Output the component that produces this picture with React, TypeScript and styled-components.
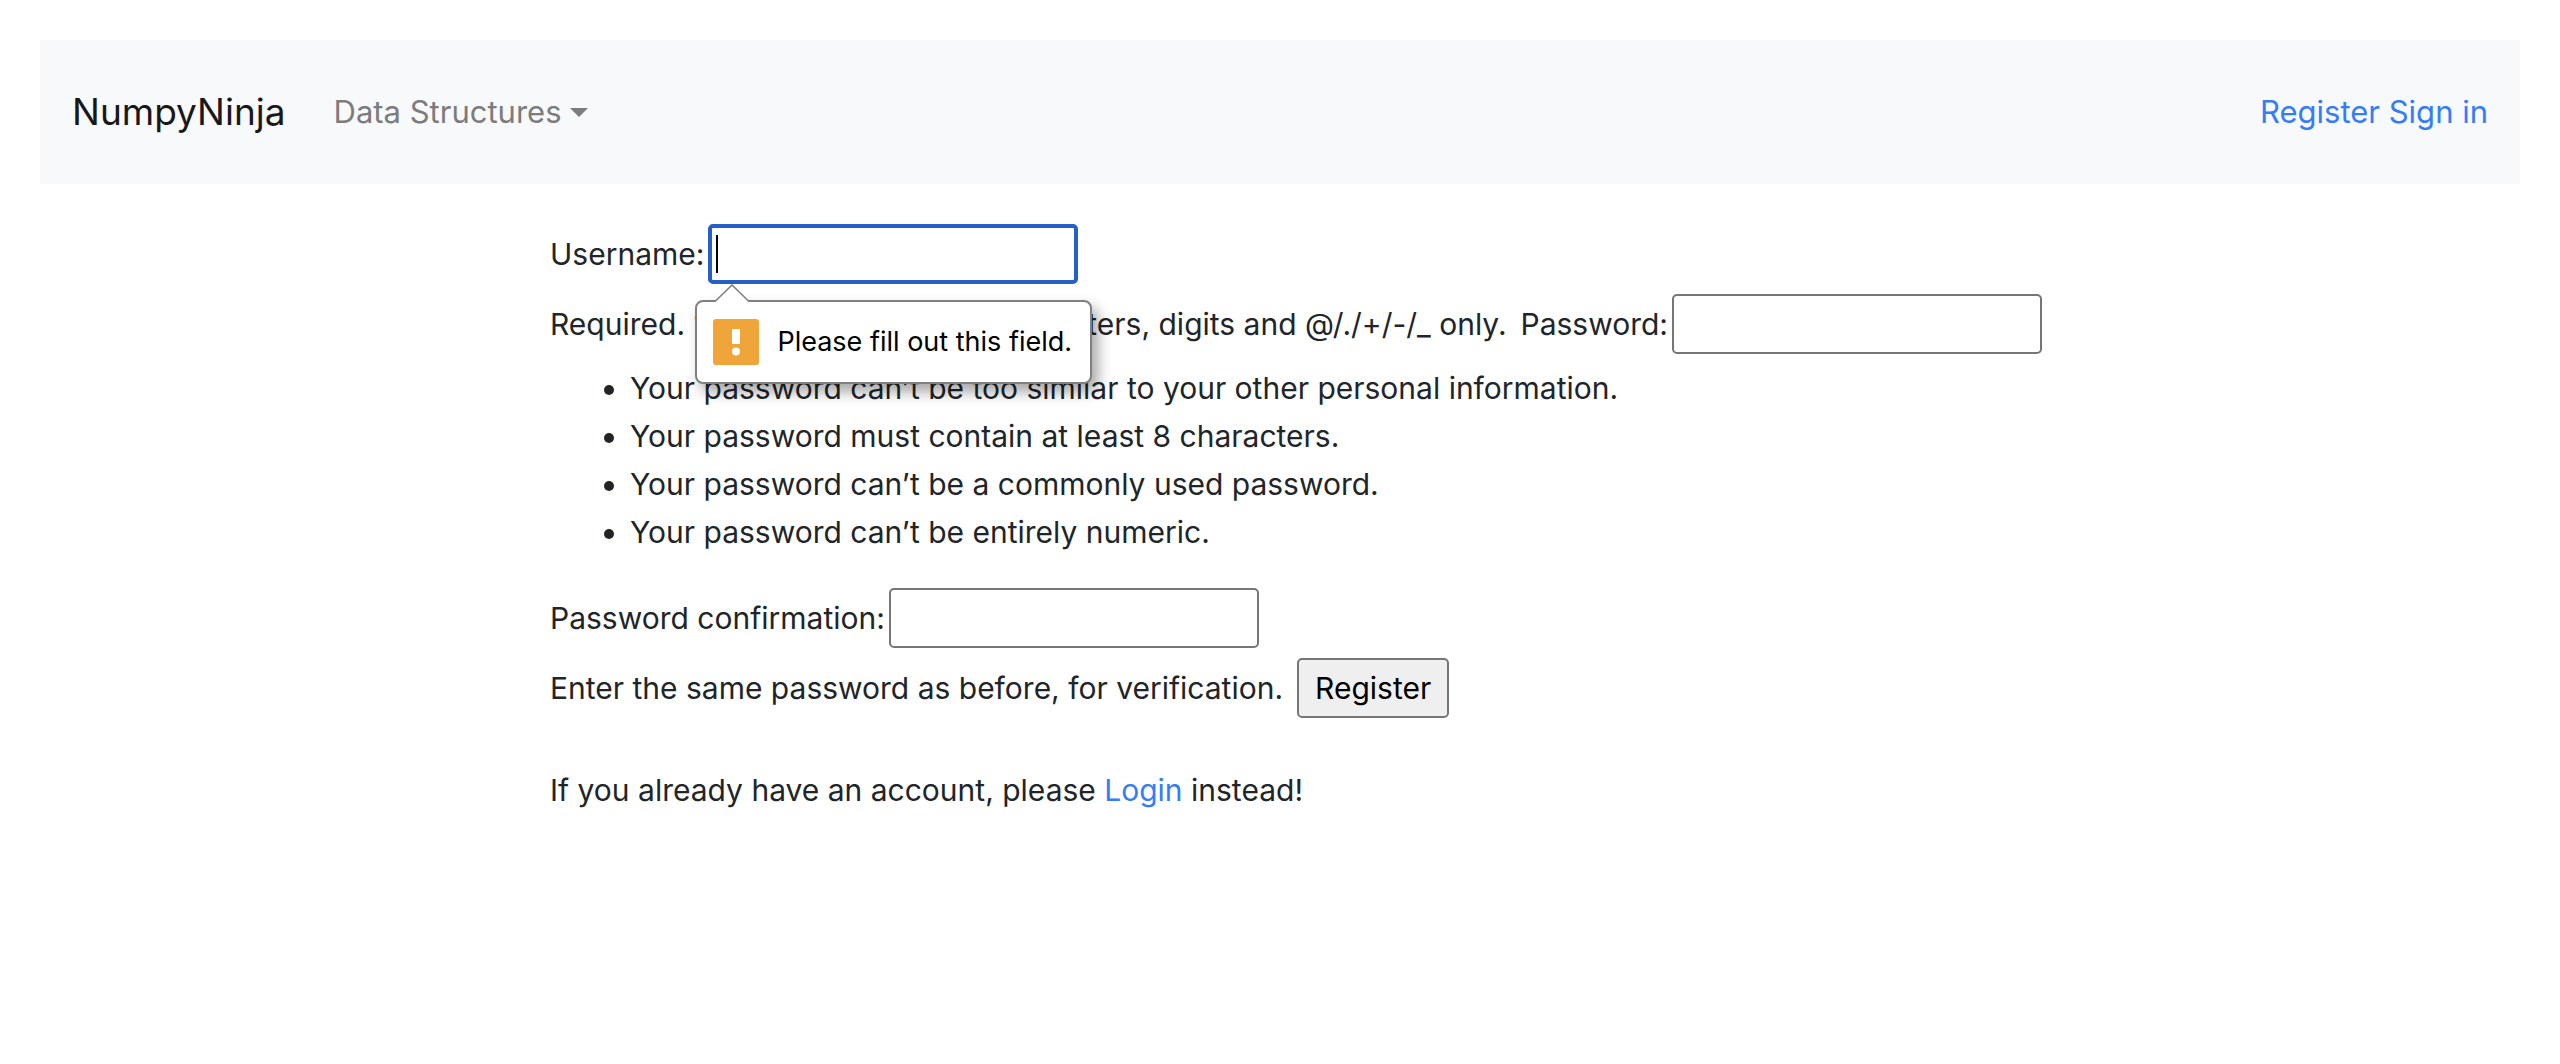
import React from "react";
import styled, { createGlobalStyle } from "styled-components";

const GlobalStyle = createGlobalStyle`
  *, *::before, *::after { box-sizing: border-box; }
  body {
    margin: 0;
    padding: 40px;
    background: #fff;
    color: #212529;
    font-family: Inter, "Liberation Sans", sans-serif;
    font-size: 30px;
    line-height: 48px;
  }
`;

const Navbar = styled.nav`
  display: flex;
  align-items: center;
  gap: 48px;
  padding: 42px 32px;
  background: #f8f9fb;
  font-size: 31px;
`;

const Brand = styled.a`
  color: #181819;
  font-size: 37px;
  line-height: 60px;
  text-decoration: none;
`;

const DropdownToggle = styled.button`
  display: flex;
  align-items: center;
  gap: 8px;
  padding: 0;
  border: 0;
  background: none;
  color: #7c7c7d;
  font: inherit;

  &::after {
    content: "";
    border: 9px solid transparent;
    border-top-color: currentColor;
    border-bottom: 0;
  }
`;

const NavLinks = styled.div`
  margin-left: auto;
`;

const Link = styled.a`
  color: #347df6;
  text-decoration: none;
`;

const Main = styled.main`
  max-width: 1460px;
  margin: 40px auto 0;
`;

const Form = styled.form`
  display: flex;
  flex-direction: column;
  gap: 10px;
`;

const Row = styled.div`
  display: flex;
  align-items: center;
  gap: 14px;
  min-height: 60px;
  white-space: nowrap;
`;

const Field = styled.div`
  display: flex;
  align-items: center;
  gap: 4px;
`;

const InputWrap = styled.div`
  position: relative;
  display: flex;
`;

const TextInput = styled.input<{ $active?: boolean }>`
  width: 370px;
  height: 60px;
  padding: 2px 6px;
  border: ${(p) => (p.$active ? "4px solid #2560c9" : "2px solid #767676")};
  border-radius: 5px;
  outline: none;
  background: #fff;
  color: #000;
  font: inherit;
`;

const Caret = styled.span`
  position: absolute;
  top: 11px;
  left: 8px;
  width: 2px;
  height: 38px;
  background: #000;
`;

const Popover = styled.div`
  position: absolute;
  z-index: 1;
  top: 76px;
  left: -13px;
  display: flex;
  align-items: center;
  gap: 18px;
  height: 84px;
  padding: 0 18px 0 16px;
  border: 2px solid #808080;
  border-radius: 8px;
  background: #fff;
  box-shadow: 6px 8px 14px rgba(0, 0, 0, 0.35);
  color: #000;
  font-size: 27px;
`;

const Pointer = styled.svg`
  position: absolute;
  top: -18px;
  left: 18px;
`;

const Rules = styled.ul`
  margin: 0 0 22px;
  padding-left: 80px;
`;

const SubmitButton = styled.button`
  height: 60px;
  padding: 0 16px;
  border: 2px solid #767676;
  border-radius: 5px;
  background: #efefef;
  color: #000;
  font: inherit;
`;

const Footnote = styled.p`
  margin: 48px 0 0;
`;

const passwordRules = [
  "Your password can’t be too similar to your other personal information.",
  "Your password must contain at least 8 characters.",
  "Your password can’t be a commonly used password.",
  "Your password can’t be entirely numeric.",
];

function ValidationPopover({ message }: { message: string }) {
  return (
    <Popover role="alert">
      <Pointer width="34" height="20" viewBox="0 0 34 20" aria-hidden="true">
        <path d="M0 20V18L17 1L34 18V20Z" fill="#fff" />
        <path d="M0 17.5L17 1L34 17.5" fill="none" stroke="#808080" strokeWidth="1.6" />
      </Pointer>
      <svg width="46" height="46" viewBox="0 0 46 46" aria-hidden="true">
        <rect width="46" height="46" rx="3" fill="#f0a53a" />
        <path d="M19 10H27V25H19Z" fill="#fff" />
        <circle cx="23" cy="32.5" r="4" fill="#fff" />
      </svg>
      <span>{message}</span>
    </Popover>
  );
}

export default function App() {
  return (
    <>
      <GlobalStyle />
      <Navbar>
        <Brand href="#">NumpyNinja</Brand>
        <DropdownToggle type="button">Data Structures</DropdownToggle>
        <NavLinks>
          <Link href="#register">Register</Link> <Link href="#login">Sign in</Link>
        </NavLinks>
      </Navbar>
      <Main>
        <Form>
          <Row>
            <Field>
              <label htmlFor="username">Username:</label>
              <InputWrap>
                <TextInput id="username" type="text" $active />
                <Caret />
                <ValidationPopover message="Please fill out this field." />
              </InputWrap>
            </Field>
          </Row>
          <Row>
            <span>Required. 150 characters or fewer. Letters, digits and @/./+/-/_ only.</span>
            <Field>
              <label htmlFor="password1">Password:</label>
              <TextInput id="password1" type="password" />
            </Field>
          </Row>
          <Rules>
            {passwordRules.map((rule) => (
              <li key={rule}>{rule}</li>
            ))}
          </Rules>
          <Row>
            <Field>
              <label htmlFor="password2">Password confirmation:</label>
              <TextInput id="password2" type="password" />
            </Field>
          </Row>
          <Row>
            <span>Enter the same password as before, for verification.</span>
            <SubmitButton type="submit">Register</SubmitButton>
          </Row>
        </Form>
        <Footnote>
          If you already have an account, please <Link href="#login">Login</Link> instead!
        </Footnote>
      </Main>
    </>
  );
}
